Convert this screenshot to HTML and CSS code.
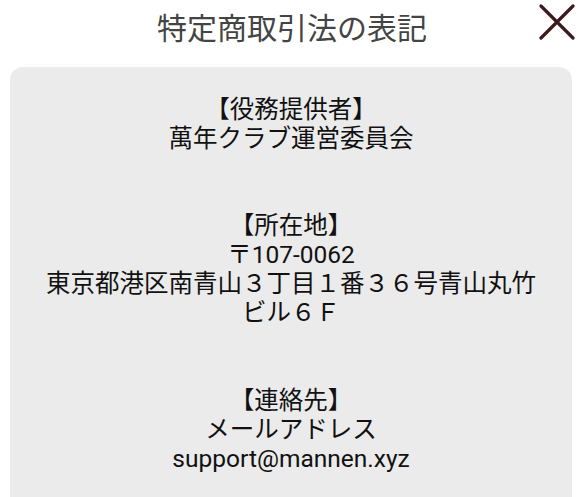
FILE: index.html
```html
<!DOCTYPE html>
<html lang="ja">
<head>
<meta charset="utf-8">
<link rel="stylesheet" href="styles.css">
</head>
<body>
<header class="top">
  <h1 class="title">特定商取引法の表記</h1>
  <button class="close" aria-label="閉じる">
    <svg width="36" height="36" viewBox="0 0 36 36"><path d="M2 2 L34 34 M34 2 L2 34" stroke="#3d1a1c" stroke-width="3.2" stroke-linecap="round" fill="none"/></svg>
  </button>
</header>
<main class="card">
  <section class="sec">
    <p class="line">【役務提供者】</p>
    <p class="line">萬年クラブ運営委員会</p>
  </section>
  <section class="sec">
    <p class="line">【所在地】</p>
    <p class="line">〒107-0062</p>
    <p class="line">東京都港区南青山３丁目１番３６号青山丸竹</p>
    <p class="line">ビル６Ｆ</p>
  </section>
  <section class="sec">
    <p class="line">【連絡先】</p>
    <p class="line">メールアドレス</p>
    <p class="line">support@mannen.xyz</p>
  </section>
</main>
</body>
</html>
```
FILE: styles.css
```css
html, body {
  margin: 0;
  padding: 0;
  background: #ffffff;
  height: 100%;
  overflow: hidden;
}
body {
  font-family: Roboto, "Noto Sans CJK JP", sans-serif;
}
.top {
  position: relative;
  height: 67px;
}
.title {
  margin: 0;
  font-weight: 400;
  font-size: 30px;
  line-height: 58px;
  color: #444444;
  text-align: center;
}
.close {
  position: absolute;
  top: 4px;
  left: 539px;
  width: 36px;
  height: 36px;
  padding: 0;
  border: 0;
  background: none;
}
.close svg { display: block; }
.card {
  margin: 0 12px 0 10px;
  background: #ebebeb;
  border-radius: 13px 13px 0 0;
  padding: 28px 0 40px;
  min-height: 500px;
  color: #111111;
  text-align: center;
}
.sec {
  margin: 0 0 58px;
}
.line {
  margin: 0;
  font-size: 24.5px;
  line-height: 29.1px;
}
```
